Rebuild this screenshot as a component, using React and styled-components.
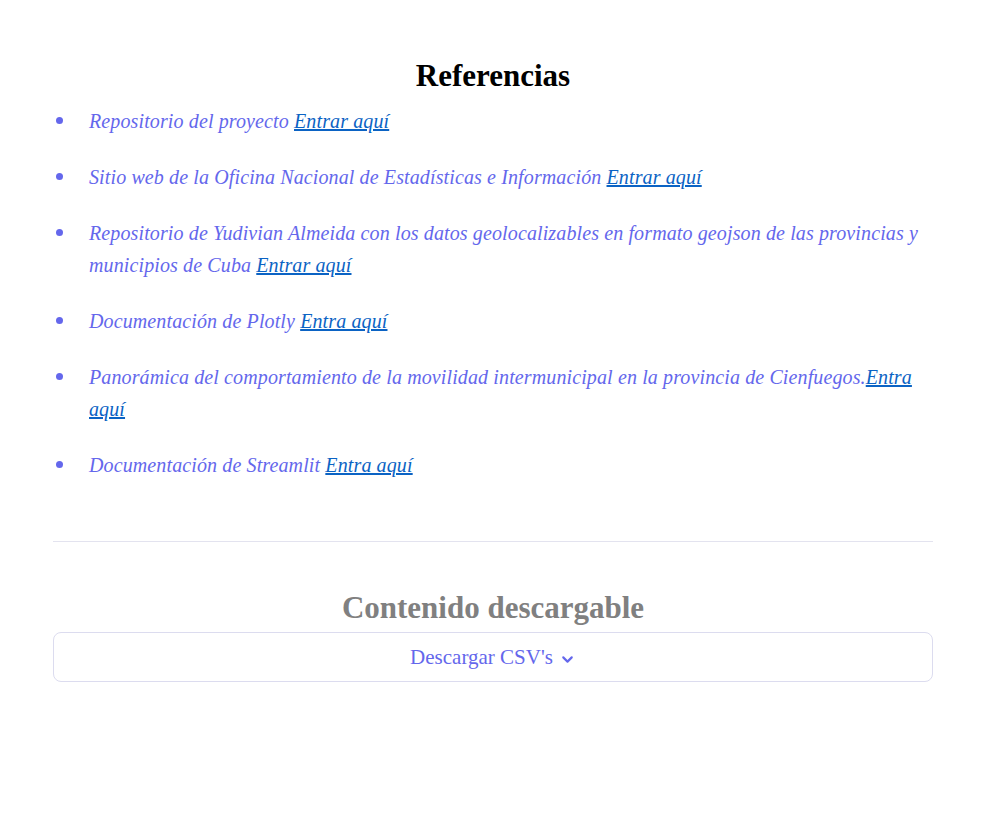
import React from "react";
import styled, { createGlobalStyle } from "styled-components";

const GlobalStyle = createGlobalStyle`
  html, body {
    margin: 0;
    padding: 0;
    background: #ffffff;
  }
  body {
    font-family: "Liberation Serif", "Times New Roman", serif;
  }
`;

const references = [
  { text: "Repositorio del proyecto ", link: "Entrar aquí" },
  {
    text: "Sitio web de la Oficina Nacional de Estadísticas e Información ",
    link: "Entrar aquí",
  },
  {
    text:
      "Repositorio de Yudivian Almeida con los datos geolocalizables en formato geojson de las provincias y municipios de Cuba ",
    link: "Entrar aquí",
  },
  { text: "Documentación de Plotly ", link: "Entra aquí" },
  {
    text:
      "Panorámica del comportamiento de la movilidad intermunicipal en la provincia de Cienfuegos.",
    link: "Entra aquí",
  },
  { text: "Documentación de Streamlit ", link: "Entra aquí" },
];

const App = () => {
  return (
    <>
      <GlobalStyle />
      <Page>
        <Main>
          <Title>Referencias</Title>
          <RefList>
            {references.map((r, i) => (
              <RefItem key={i}>
                <Bullet />
                <RefText>
                  {r.text}
                  <RefLink href="#">{r.link}</RefLink>
                </RefText>
              </RefItem>
            ))}
          </RefList>
          <Divider />
          <Title $muted>Contenido descargable</Title>
          <Expander>
            <ExpanderLabel>Descargar CSV's</ExpanderLabel>
            <Chevron viewBox="0 0 24 24">
              <path d="M6 9l6 6 6-6" />
            </Chevron>
          </Expander>
        </Main>
      </Page>
    </>
  );
};

export default App;

const Page = styled.div`
  width: 100%;
  min-height: 817px;
  padding-left: 53px;
  box-sizing: border-box;
`;

const Main = styled.div`
  width: 880px;
  padding-top: 58px;
`;

const Title = styled.h2`
  margin: 0;
  text-align: center;
  font-family: "Liberation Serif", "Times New Roman", serif;
  font-weight: 700;
  font-size: 31px;
  line-height: 36px;
  color: ${(p) => (p.$muted ? "#808080" : "#000000")};
`;

const RefList = styled.ul`
  margin: 11px 0 0 0;
  padding: 0;
  list-style: none;
  color: #6467ec;
  font-family: "Liberation Serif", "Times New Roman", serif;
  font-style: italic;
  font-size: 20px;
  line-height: 32px;
  letter-spacing: 0.12px;
`;

const RefItem = styled.li`
  display: flex;
  margin-bottom: 24px;
`;

const Bullet = styled.span`
  flex: 0 0 36px;
  display: flex;
  height: 32px;
  align-items: center;

  &::before {
    content: "";
    width: 7px;
    height: 7px;
    margin-left: 3px;
    margin-top: -1px;
    border-radius: 50%;
    background: #6467ec;
  }
`;

const RefText = styled.span`
  flex: 1;
`;

const RefLink = styled.a`
  color: #0b63c4;
  text-decoration: underline;
`;

const Divider = styled.hr`
  margin: 60px 0 48px 0;
  border: none;
  border-top: 1px solid #e3e3ef;
`;

const Expander = styled.div`
  margin-top: 6px;
  height: 48px;
  border: 1px solid #dcdcef;
  border-radius: 8px;
  display: flex;
  align-items: center;
  justify-content: center;
  gap: 6px;
`;

const ExpanderLabel = styled.span`
  font-family: "Liberation Serif", "Times New Roman", serif;
  font-size: 21px;
  color: #6467ec;
`;

const Chevron = styled.svg`
  width: 17px;
  height: 17px;
  fill: none;
  stroke: #6467ec;
  stroke-width: 3;
  stroke-linecap: round;
  stroke-linejoin: round;
  margin-top: 4px;
`;
